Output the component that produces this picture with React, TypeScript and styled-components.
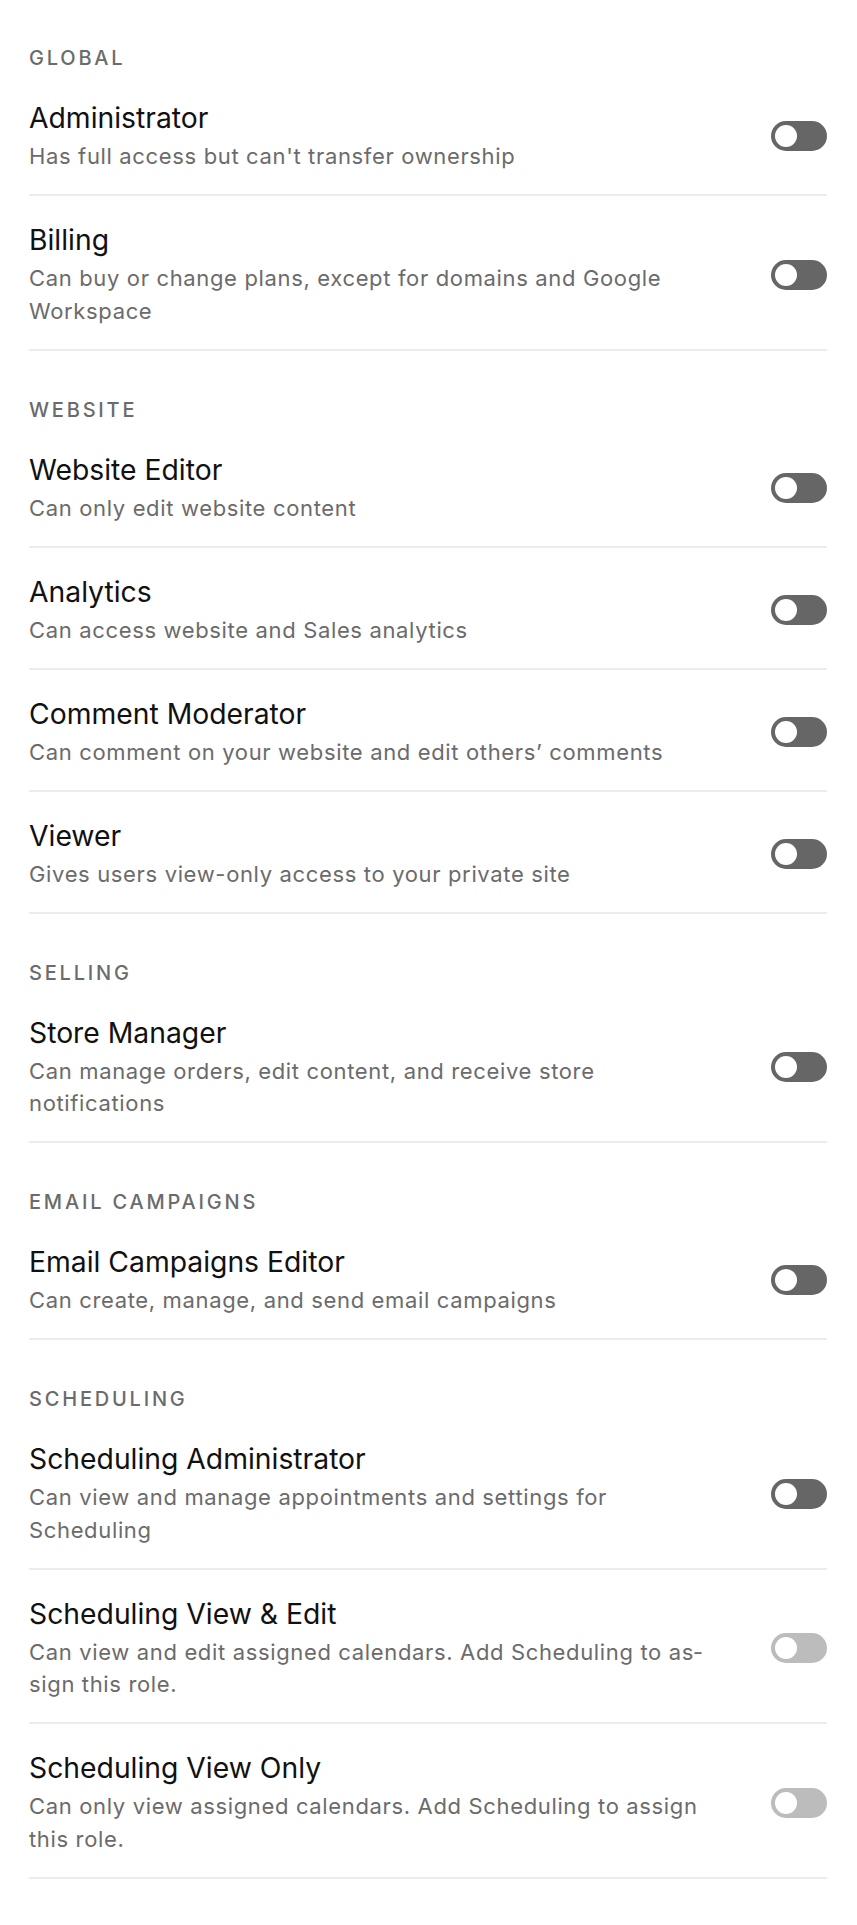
import React from "react";
import styled, { createGlobalStyle } from "styled-components";

const GlobalStyle = createGlobalStyle`
  html, body { margin: 0; padding: 0; background: #fff; }
  body { font-family: Inter, "Noto Sans", sans-serif; -webkit-font-smoothing: antialiased; }
`;

const Page = styled.div`
  padding: 46px 30px 45px 29px;
  display: flex;
  flex-direction: column;
`;

const Section = styled.section`
  display: flex;
  flex-direction: column;
  & + & { margin-top: 47px; }
`;

const SectionTitle = styled.h2`
  margin: 0 0 4px 0;
  font-size: 20px;
  line-height: 24px;
  font-weight: 500;
  letter-spacing: 2.8px;
  color: #6b6b6b;
  text-transform: uppercase;
`;

const Row = styled.div`
  display: flex;
  align-items: center;
  justify-content: space-between;
  padding: 26px 0 21.5px 0;
  border-bottom: 2px solid #ececec;
`;

const Text = styled.div`
  display: flex;
  flex-direction: column;
  gap: 4px;
  width: 702px;
`;

const Title = styled.div`
  font-size: 28.3px;
  line-height: 36px;
  color: #111;
  font-weight: 400;
`;

const Desc = styled.div`
  font-size: 22px;
  line-height: 32.5px;
  letter-spacing: 0.65px;
  color: #6b6b6b;
`;

const Track = styled.div<{ $disabled?: boolean }>`
  flex: none;
  width: 56px;
  height: 30px;
  border-radius: 15px;
  background: ${(p) => (p.$disabled ? "#bcbcbc" : "#666666")};
  position: relative;
`;

const Knob = styled.div`
  position: absolute;
  left: 4px;
  top: 4px;
  width: 22px;
  height: 22px;
  border-radius: 50%;
  background: #fff;
`;

type Item = { title: string; desc: string; disabled?: boolean };
type Group = { name: string; items: Item[] };

const groups: Group[] = [
  {
    name: "Global",
    items: [
      { title: "Administrator", desc: "Has full access but can't transfer ownership" },
      { title: "Billing", desc: "Can buy or change plans, except for domains and Google Workspace" },
    ],
  },
  {
    name: "Website",
    items: [
      { title: "Website Editor", desc: "Can only edit website content" },
      { title: "Analytics", desc: "Can access website and Sales analytics" },
      { title: "Comment Moderator", desc: "Can comment on your website and edit others\u2019 comments" },
      { title: "Viewer", desc: "Gives users view-only access to your private site" },
    ],
  },
  {
    name: "Selling",
    items: [
      { title: "Store Manager", desc: "Can manage orders, edit content, and receive store notifications" },
    ],
  },
  {
    name: "Email Campaigns",
    items: [
      { title: "Email Campaigns Editor", desc: "Can create, manage, and send email campaigns" },
    ],
  },
  {
    name: "Scheduling",
    items: [
      { title: "Scheduling Administrator", desc: "Can view and manage appointments and settings for Scheduling" },
      {
        title: "Scheduling View & Edit",
        desc: "Can view and edit assigned calendars. Add Scheduling to as\u00ADsign this role.",
        disabled: true,
      },
      {
        title: "Scheduling View Only",
        desc: "Can only view assigned calendars. Add Scheduling to assign this role.",
        disabled: true,
      },
    ],
  },
];

export default function App() {
  return (
    <>
      <GlobalStyle />
      <Page>
        {groups.map((g) => (
          <Section key={g.name}>
            <SectionTitle>{g.name}</SectionTitle>
            {g.items.map((it) => (
              <Row key={it.title}>
                <Text>
                  <Title>{it.title}</Title>
                  <Desc>{it.desc}</Desc>
                </Text>
                <Track $disabled={it.disabled}>
                  <Knob />
                </Track>
              </Row>
            ))}
          </Section>
        ))}
      </Page>
    </>
  );
}
